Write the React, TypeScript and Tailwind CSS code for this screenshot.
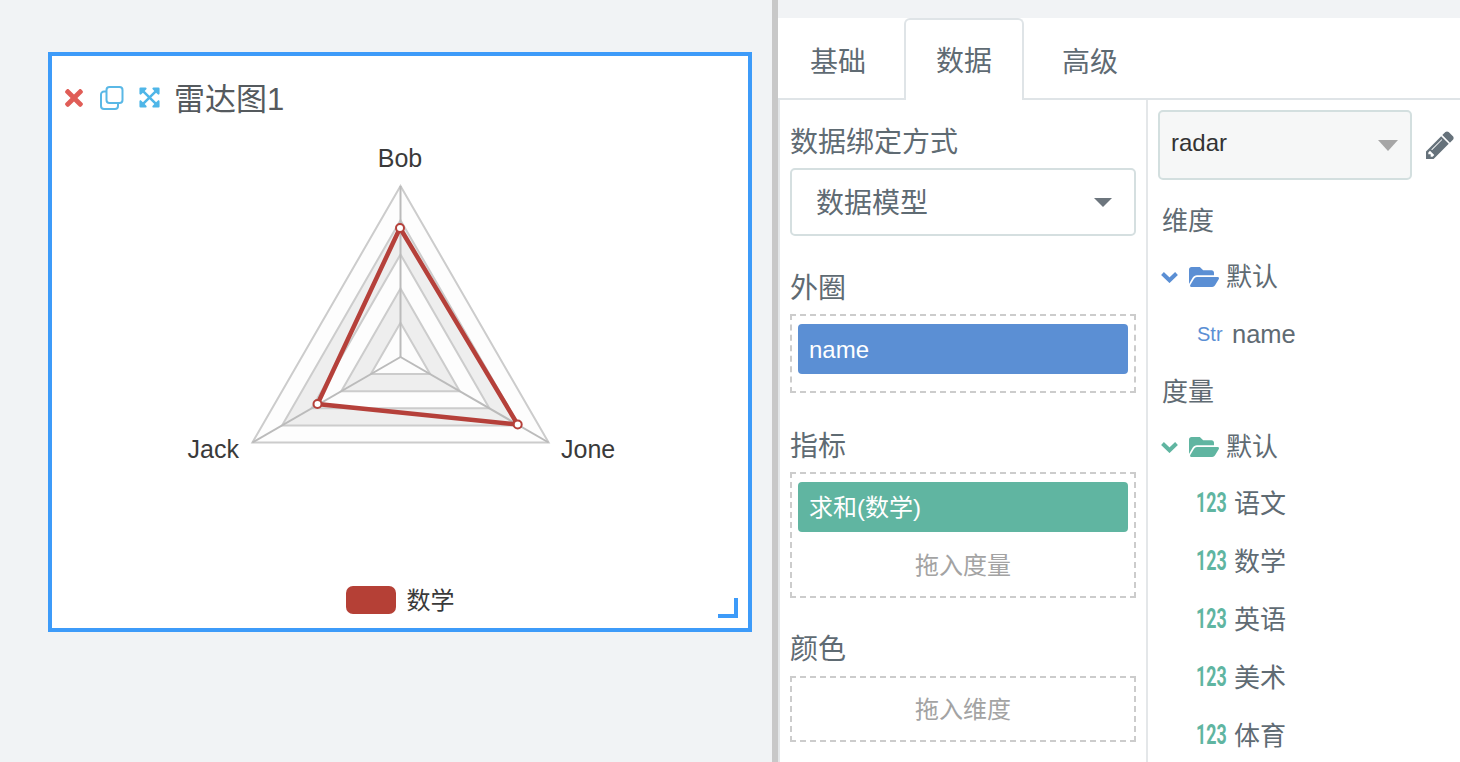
import React from 'react';
import { FaTimes, FaExpandArrowsAlt, FaFolderOpen } from 'react-icons/fa';

const FONT = '[font-family:"Liberation_Sans","Noto_Sans_CJK_SC",sans-serif]';

const cx = 400.5;
const cy = 357;
const R = 171;

function triangle(r: number) {
  const dx = r * 0.866;
  const dy = r * 0.5;
  return `${cx},${cy - r} ${cx + dx},${cy + dy} ${cx - dx},${cy + dy}`;
}

function RadarChart() {
  const rings = [5, 4, 3, 2, 1];
  return (
    <svg width="696" height="470" viewBox="52 130 696 470" className="block shrink-0">
      {rings.map((n) => (
        <polygon
          key={n}
          points={triangle((R / 5) * n)}
          fill={n % 2 === 0 ? '#eeeeee' : '#fdfdfd'}
          stroke="#cccccc"
          strokeWidth="2"
        />
      ))}
      <line x1={cx} y1={cy} x2={cx} y2={cy - R} stroke="#bbbbbb" strokeWidth="2" />
      <line x1={cx} y1={cy} x2={cx + R * 0.866} y2={cy + R * 0.5} stroke="#bbbbbb" strokeWidth="2" />
      <line x1={cx} y1={cy} x2={cx - R * 0.866} y2={cy + R * 0.5} stroke="#bbbbbb" strokeWidth="2" />
      <polygon points="400,228 517.7,424.5 317.5,404" fill="none" stroke="#b5403a" strokeWidth="4.5" />
      <circle cx="400" cy="228" r="4" fill="#ffffff" stroke="#b5403a" strokeWidth="2" />
      <circle cx="517.7" cy="424.5" r="4" fill="#ffffff" stroke="#b5403a" strokeWidth="2" />
      <circle cx="317.5" cy="404" r="4" fill="#ffffff" stroke="#b5403a" strokeWidth="2" />
      <g fill="#3a3a3a" fontSize="25" fontFamily='"Liberation Sans", sans-serif'>
        <text x="400" y="167" textAnchor="middle">Bob</text>
        <text x="561" y="458">Jone</text>
        <text x="239" y="458" textAnchor="end">Jack</text>
      </g>
    </svg>
  );
}

function ChartCard() {
  return (
    <div className="relative mt-[52px] ml-[48px] w-[704px] h-[580px] border-4 border-[#3d9bf9] bg-white flex flex-col">
      <div className="h-[74px] shrink-0 flex items-center pl-[11px] pt-[9px]">
        <FaTimes className="text-[#e05d57] w-[22px] h-[26px]" />
        <svg width="26" height="26" viewBox="0 0 26 26" className="ml-[14px]" fill="none" stroke="#5ab8e6" strokeWidth="2">
          <rect x="7.5" y="2" width="16" height="16" rx="3" />
          <path d="M7 6.5 H5 a3 3 0 0 0 -3 3 V21 a3 3 0 0 0 3 3 h11 a3 3 0 0 0 3 -3 v-2" />
        </svg>
        <FaExpandArrowsAlt className="text-[#4fb6e8] w-[23px] h-[23px] ml-[13px]" />
        <span className="ml-[13px] pt-[4px] text-[31px] leading-[40px] text-[#555a5e]">雷达图1</span>
      </div>
      <RadarChart />
      <div className="flex items-center justify-center mt-[-17px]">
        <div className="w-[50px] h-[28px] rounded-[7px] bg-[#b54036]" />
        <span className="ml-[11px] text-[24px] leading-[32px] pt-[2px] text-[#3a3a3a]">数学</span>
      </div>
      <div className="absolute left-[666px] top-[542px] w-[20px] h-[20px] border-r-4 border-b-4 border-[#3d9bf9]" />
    </div>
  );
}

function Tabs() {
  return (
    <div className="h-[82px] flex border-b-2 border-[#dfe4e7] bg-white shrink-0">
      <div className="w-[120px] h-[80px] pt-[10px] flex items-center justify-center text-[28px] text-[#5f6b73]">基础</div>
      <div className="w-[120px] h-[82px] ml-[6px] pt-[4px] flex items-center justify-center text-[28px] text-[#5f6b73] bg-white border-2 border-b-0 border-[#dfe4e7] rounded-t-[6px]">数据</div>
      <div className="w-[120px] h-[80px] ml-[6px] pt-[10px] flex items-center justify-center text-[28px] text-[#5f6b73]">高级</div>
    </div>
  );
}

function Label({ children, className }: { children: React.ReactNode; className: string }) {
  return <div className={`h-[40px] leading-[43px] text-[28px] text-[#5f6b73] ${className}`}>{children}</div>;
}

function BindPanel() {
  return (
    <div className="w-[370px] shrink-0 pl-[10px] pr-[10px] border-l-2 border-r-2 border-[#e4e7e9]">
      <Label className="mt-[21px]">数据绑定方式</Label>
      <div className="mt-[7px] h-[68px] border-2 border-[#d5dfe0] rounded-[5px] flex items-center justify-between pl-[24px] pr-[22px] text-[28px] text-[#5f6b73]">
        <span className="pt-[4px]">数据模型</span>
        <span className="w-0 h-0 border-x-[9px] border-x-transparent border-t-[9px] border-t-[#6c757d]" />
      </div>

      <Label className="mt-[31px]">外圈</Label>
      <div className="mt-[7px] h-[79px] border-2 border-dashed border-[#cccccc] pt-[8px] pl-[6px] pr-[6px]">
        <div className="h-[50px] rounded-[4px] bg-[#5b8fd4] pl-[11px] leading-[52px] text-[24px] text-white">name</div>
      </div>

      <Label className="mt-[32px]">指标</Label>
      <div className="mt-[7px] h-[126px] border-2 border-dashed border-[#cccccc] pt-[8px] pl-[6px] pr-[6px]">
        <div className="h-[50px] rounded-[4px] bg-[#60b5a1] pl-[11px] leading-[52px] text-[24px] text-white">求和(数学)</div>
        <div className="h-[66px] leading-[68px] text-center text-[24px] text-[#a3a3a3]">拖入度量</div>
      </div>

      <Label className="mt-[30px]">颜色</Label>
      <div className="mt-[8px] h-[66px] border-2 border-dashed border-[#cccccc] leading-[64px] text-center text-[24px] text-[#a3a3a3]">拖入维度</div>
    </div>
  );
}

function GroupRow({ color, className }: { color: string; className: string }) {
  return (
    <div className={`h-[40px] flex items-center ${className}`} style={{ color }}>
      <svg width="17" height="11" viewBox="0 0 17 11" className="ml-[13px]" fill="none" stroke="currentColor" strokeWidth="4">
        <path d="M1.5 1.5 L8.5 8.3 L15.5 1.5" />
      </svg>
      <FaFolderOpen className="w-[30px] h-[28px] ml-[11px]" />
      <span className="ml-[7px] text-[26px] text-[#5f6b73]">默认</span>
    </div>
  );
}

function MeasureRow({ name }: { name: string }) {
  return (
    <div className="h-[58px] flex items-center pl-[48px]">
      <span className="w-[38px] shrink-0 origin-left scale-x-[0.66] font-bold text-[27px] text-[#60b5a1] [font-family:Roboto,sans-serif]">123</span>
      <span className="pt-[2px] text-[26px] text-[#5f6b73]">{name}</span>
    </div>
  );
}

function FieldPanel() {
  return (
    <div className="flex-1 min-w-0 overflow-hidden">
      <div className="mt-[10px] ml-[10px] flex items-center">
        <div className="w-[254px] h-[70px] bg-[#f6f7f7] border-2 border-[#d3dfdf] rounded-[5px] flex items-center justify-between pl-[11px] pr-[12px]">
          <span className="pb-[4px] text-[24px] text-[#333333]">radar</span>
          <span className="w-0 h-0 border-x-[10px] border-x-transparent border-t-[11px] border-t-[#a6a6a6]" />
        </div>
        <svg width="28" height="28" viewBox="128 128 1536 1536" className="ml-[14px]" fill="#66727b">
          <path d="M491 1536l91-91-235-235-91 91v107h128v128h107zm523-928q0-22-22-22-10 0-17 7l-542 542q-7 7-7 17 0 22 22 22 10 0 17-7l542-542q7-7 7-17zm-54-192l416 416-832 832h-416v-416zm683 96q0 53-37 90l-166 166-416-416 166-165q36-38 90-38 53 0 91 38l235 234q37 39 37 91z" />
        </svg>
      </div>
      <div className="mt-[21px] ml-[14px] h-[40px] leading-[40px] text-[26px] text-[#5f6b73]">维度</div>
      <GroupRow color="#5b8fd4" className="mt-[16px]" />
      <div className="h-[40px] mt-[17px] flex items-center pl-[49px]">
        <span className="w-[35px] shrink-0 text-[20px] text-[#5b8fd4]">Str</span>
        <span className="text-[25.5px] text-[#5f6b73]">name</span>
      </div>
      <div className="mt-[17px] ml-[14px] h-[40px] leading-[42px] text-[26px] text-[#5f6b73]">度量</div>
      <GroupRow color="#60b5a1" className="mt-[16px]" />
      <div className="mt-[7px]">
        {['语文', '数学', '英语', '美术', '体育'].map((n) => (
          <MeasureRow key={n} name={n} />
        ))}
      </div>
    </div>
  );
}

export default function App() {
  return (
    <div className={`w-[1460px] h-[762px] overflow-hidden flex bg-[#f1f3f5] ${FONT}`}>
      <div className="w-[772px] shrink-0">
        <ChartCard />
      </div>
      <div className="w-[6px] shrink-0 bg-[#c8c8c8]" />
      <div className="flex-1 min-w-0 mt-[18px] bg-white flex flex-col">
        <Tabs />
        <div className="flex flex-1 min-h-0">
          <BindPanel />
          <FieldPanel />
        </div>
      </div>
    </div>
  );
}
